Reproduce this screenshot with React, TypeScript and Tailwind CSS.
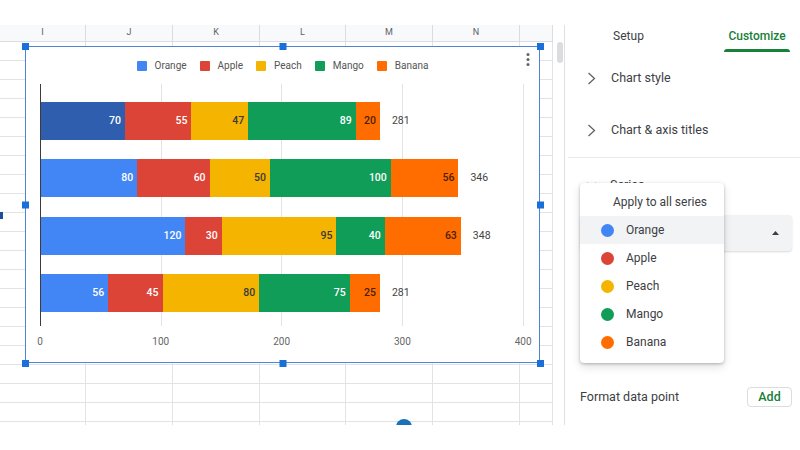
const SERIES = [
  { name: 'Orange', bg: 'bg-[#4285f4]', label: 'text-white' },
  { name: 'Apple', bg: 'bg-[#db4437]', label: 'text-white' },
  { name: 'Peach', bg: 'bg-[#f4b400]', label: 'text-[#3a3a3a]' },
  { name: 'Mango', bg: 'bg-[#0f9d58]', label: 'text-white' },
  { name: 'Banana', bg: 'bg-[#ff6d01]', label: 'text-[#4a1f08]' },
];

const ROWS = [
  [70, 55, 47, 89, 20],
  [80, 60, 50, 100, 56],
  [120, 30, 95, 40, 63],
  [56, 45, 80, 75, 25],
];

// px per unit on the value axis
const SCALE = 1.208;

const COLS = [
  { label: 'I', w: 'w-[86px]' },
  { label: 'J', w: 'w-[87px]' },
  { label: 'K', w: 'w-[87px]' },
  { label: 'L', w: 'w-[86px]' },
  { label: 'M', w: 'w-[87px]' },
  { label: 'N', w: 'w-[87px]' },
  { label: '', w: 'w-[33px]' },
];

const GRID_X = ['left-[121px]', 'left-[241.5px]', 'left-[362.5px]', 'left-[483px]'];

const HANDLES = [
  '-left-[4.5px] -top-[4.5px]',
  'left-1/2 -translate-x-1/2 -top-[4.5px]',
  '-right-[4.5px] -top-[4.5px]',
  '-left-[4.5px] top-1/2 -translate-y-1/2',
  '-right-[4.5px] top-1/2 -translate-y-1/2',
  '-left-[4.5px] -bottom-[4.5px]',
  'left-1/2 -translate-x-1/2 -bottom-[4.5px]',
  '-right-[4.5px] -bottom-[4.5px]',
];

function Chart() {
  return (
    <div className="absolute left-[25px] top-[21px] w-[515px] h-[317px] bg-white border-[1.5px] border-[#4f83d6]">
      {HANDLES.map((h) => (
        <div key={h} className={`absolute ${h} w-[7px] h-[7px] bg-[#1a6fd8]`} />
      ))}

      {/* menu dots */}
      <svg className="absolute right-[9px] top-[6px]" width="4" height="13" viewBox="0 0 4 13">
        <circle cx="2" cy="1.6" r="1.5" fill="#5f6368" />
        <circle cx="2" cy="6.5" r="1.5" fill="#5f6368" />
        <circle cx="2" cy="11.4" r="1.5" fill="#5f6368" />
      </svg>

      <div className="flex flex-col h-full">
        {/* legend */}
        <div className="mt-[10.5px] h-[16px] flex items-center justify-center gap-[13px]">
          {SERIES.map((s) => (
            <div key={s.name} className="flex items-center gap-[8px]">
              <span className={`w-[10px] h-[10px] rounded-[1px] ${s.bg}`} />
              <span className="text-[10px] text-[#555]">{s.name}</span>
            </div>
          ))}
        </div>

        {/* plot */}
        <div className="relative mt-[10px] ml-[13.5px] w-[484px] h-[242px]">
          {GRID_X.map((g) => (
            <div key={g} className={`absolute ${g} top-0 bottom-0 w-px bg-[#e3e3e3]`} />
          ))}
          <div className="absolute left-0 top-0 bottom-0 w-px bg-[#3c3c3c]" />

          <div className="relative flex flex-col gap-[19.5px] pt-[18px] pl-px">
            {ROWS.map((row, r) => {
              const total = row.reduce((a, b) => a + b, 0);
              return (
                <div key={r} className="flex items-center h-[38px]">
                  {row.map((v, i) => (
                    <div
                      key={i}
                      className={`h-full flex items-center justify-end pr-[4px] text-[10.5px] font-medium ${
                        r === 0 && i === 0 ? 'bg-[#2f5eae]' : SERIES[i].bg
                      } ${SERIES[i].label}`}
                      style={{ width: v * SCALE }}
                    >
                      {v}
                    </div>
                  ))}
                  <span className="ml-[12px] text-[10.5px] text-[#444]">{total}</span>
                </div>
              );
            })}
          </div>
        </div>

        {/* axis labels */}
        <div className="mt-[9px] ml-[-46.4px] h-[14px] flex">
          {[0, 100, 200, 300, 400].map((t) => (
            <div key={t} className="w-[120.8px] shrink-0 text-center text-[10px] leading-[14px] text-[#666]">
              {t}
            </div>
          ))}
        </div>
      </div>
    </div>
  );
}

function Sheet() {
  return (
    <div className="relative w-[564px] h-full overflow-hidden flex">
      <div className="w-[553px] flex flex-col">
        <div className="flex h-[17px] shrink-0 bg-[#f8f9fa] border-b border-[#dadce0]">
          {COLS.map((c, i) => (
            <div
              key={i}
              className={`${c.w} shrink-0 border-r border-[#dadce0] flex items-center justify-center text-[9px] text-[#5f6368]`}
            >
              {c.label}
            </div>
          ))}
        </div>
        {Array.from({ length: 21 }).map((_, r) => (
          <div key={r} className="flex h-[19px] shrink-0">
            {COLS.map((c, i) => (
              <div key={i} className={`${c.w} shrink-0 border-r border-b border-[#e2e3e3]`} />
            ))}
          </div>
        ))}
      </div>

      {/* scrollbar */}
      <div className="w-[11px] pt-[17px] pl-[4px] pr-[1px]">
        <div className="h-[21px] rounded-full bg-[#dadce0]" />
      </div>

      <Chart />

      <div className="absolute left-0 top-[187px] w-[3px] h-[7px] bg-[#1b4f9c]" />
      <div className="absolute left-[396px] top-[394px] w-[16px] h-[16px] rounded-full bg-[#1a73b8]" />
    </div>
  );
}

function Chevron() {
  return (
    <svg width="9" height="13" viewBox="0 0 9 13" className="shrink-0">
      <polyline points="1.5,1 7.5,6.5 1.5,12" fill="none" stroke="#5f6368" strokeWidth="1.3" />
    </svg>
  );
}

function Panel() {
  return (
    <div className="relative w-[236px] h-full border-l border-[#e0e0e0] bg-white flex flex-col text-[12.5px] text-[#3c4043]">
      {/* tabs */}
      <div className="h-[27px] flex shrink-0">
        <div className="w-[127px] flex flex-col items-center">
          <span className="mt-[1px] h-[20px] leading-[20px] text-[12px] text-[#3c4043]">Setup</span>
        </div>
        <div className="ml-[32px] w-[66px] flex flex-col items-center">
          <span className="mt-[1px] h-[20px] leading-[20px] text-[12px] font-medium text-[#188038]">Customize</span>
          <span className="mt-[3px] w-full h-[3px] rounded-t-[3px] bg-[#188038]" />
        </div>
      </div>

      <div className="h-[52px] flex items-center pl-[22px] gap-[15px] shrink-0">
        <Chevron />
        <span>Chart style</span>
      </div>
      <div className="h-[53px] flex items-center pl-[22px] gap-[15px] shrink-0">
        <Chevron />
        <span>Chart &amp; axis titles</span>
      </div>
      <div className="ml-[3px] h-px bg-[#e8eaed] shrink-0" />

      <div className="h-[50px] pt-[5px] flex items-center pl-[21px] gap-[13px] shrink-0">
        <svg width="11" height="7" viewBox="0 0 11 7">
          <polyline points="1,1 5.5,5.5 10,1" fill="none" stroke="#5f6368" strokeWidth="1.3" />
        </svg>
        <span>Series</span>
      </div>

      <div className="mt-[7px] ml-[15px] mr-[8px] h-[36px] shrink-0 rounded-[4px] bg-[#f1f3f4] shadow-[0_1px_2px_rgba(0,0,0,0.15)] flex items-center justify-end pr-[13px]">
        <svg width="7" height="4" viewBox="0 0 7 4">
          <polygon points="0,4 3.5,0 7,4" fill="#3c4043" />
        </svg>
      </div>

      <div className="mt-auto mb-[18px] ml-[15px] mr-[8px] h-[20px] flex items-center justify-between">
        <span>Format data point</span>
        <button className="w-[45px] h-[20px] rounded-[4px] border border-[#dadce0] bg-white text-[12.5px] font-medium text-[#188038]">
          Add
        </button>
      </div>

      {/* series dropdown */}
      <div className="absolute left-[15px] top-[158px] w-[144px] h-[180px] rounded-[4px] bg-white shadow-[0_1px_3px_rgba(0,0,0,0.25),0_4px_10px_rgba(0,0,0,0.12)] text-[12px] text-[#3c4043]">
        <div className="h-[33px] pt-[5px] pl-[33px] flex items-center">Apply to all series</div>
        {SERIES.map((s, i) => (
          <div
            key={s.name}
            className={`h-[28px] flex items-center pl-[21px] gap-[12px] ${i === 0 ? 'bg-[#f1f3f4]' : ''}`}
          >
            <span className={`w-[13px] h-[13px] rounded-full ${s.bg}`} />
            <span>{s.name}</span>
          </div>
        ))}
      </div>
    </div>
  );
}

export default function App() {
  return (
    <div className="w-[800px] h-[450px] bg-white flex flex-col overflow-hidden font-['Roboto','Liberation_Sans',sans-serif]">
      <div className="h-[25px] shrink-0" />
      <div className="h-[400px] flex shrink-0">
        <Sheet />
        <Panel />
      </div>
      <div className="flex-1" />
    </div>
  );
}
